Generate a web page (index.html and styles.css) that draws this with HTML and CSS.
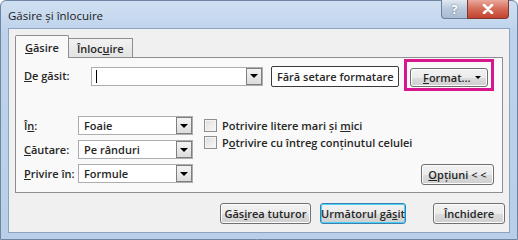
FILE: index.html
```html
<!DOCTYPE html>
<html lang="ro">
<head>
  <meta charset="UTF-8" />
  <meta name="viewport" content="width=device-width, initial-scale=1.0"/>
  <title>Găsire și înlocuire</title>
  <link rel="stylesheet" href="styles.css">
</head>
<body>
  <div class="window">
    <div class="titlebar">
      <span class="title">Găsire și înlocuire</span>
      <div class="caption-btns">
        <span class="cap help">?</span>
        <span class="cap close">
          <svg width="14" height="10" viewBox="0 0 14 10"><path d="M3 1 L11 9 M11 1 L3 9" stroke="#fff" stroke-width="2.6" stroke-linecap="round"/></svg>
        </span>
      </div>
    </div>

    <div class="client">
      <div class="tabs">
        <div class="tab active"><u>G</u>ăsire</div>
        <div class="tab">Înloc<u>u</u>ire</div>
      </div>

      <div class="panel">
        <div class="find-row">
          <label class="find-label"><u>D</u>e găsit:</label>
          <div class="combo find-combo">
            <span class="caret"></span>
            <span class="drop"><span class="arrow"></span></span>
          </div>
          <button class="btn plain">Fără setare formatare</button>
          <div class="highlight">
            <button class="btn split"><span><u>F</u>ormat...</span><span class="small-arrow"></span></button>
          </div>
        </div>

        <div class="options">
          <div class="fields">
            <label>Î<u>n</u>:</label>
            <div class="combo"><span class="value">Foaie</span><span class="drop"><span class="arrow"></span></span></div>
            <label><u>C</u>ăutare:</label>
            <div class="combo"><span class="value">Pe rânduri</span><span class="drop"><span class="arrow"></span></span></div>
            <label><u>P</u>rivire în:</label>
            <div class="combo"><span class="value">Formule</span><span class="drop"><span class="arrow"></span></span></div>
          </div>

          <div class="checks">
            <div class="check"><span class="box"></span>Potrivire litere mari și&nbsp;<u>m</u>ici</div>
            <div class="check"><span class="box"></span>P<u>o</u>trivire cu întreg conținutul celulei</div>
            <button class="btn options-btn"><u>O</u>pțiuni &lt; &lt;</button>
          </div>
        </div>
      </div>

      <div class="actions">
        <button class="btn find-all">Găs<u>i</u>rea tuturor</button>
        <button class="btn default">Următorul gă<u>s</u>it</button>
        <button class="btn close-btn">Închidere</button>
      </div>
    </div>
  </div>
</body>
</html>
```

FILE: styles.css
```css
* {
  margin: 0;
  padding: 0;
  box-sizing: border-box;
}

body {
  font-family: 'Open Sans', 'Noto Sans', sans-serif;
  font-size: 11px;
  font-weight: 600;
  color: #262626;
  background: #fff;
}

.window {
  width: 518px;
  height: 240px;
  background: linear-gradient(#d0e0f2, #bed3eb 30px, #b9cfe8);
  border: 1px solid #6e86a3;
  border-radius: 6px 6px 0 0;
  padding: 0 7px 6px 7px;
  display: flex;
  flex-direction: column;
}

.titlebar {
  height: 27px;
  display: flex;
  justify-content: space-between;
  align-items: flex-start;
}

.title {
  margin-top: 7px;
  font-size: 11.5px;
  font-weight: 400;
  color: #1a1a1a;
}

.caption-btns {
  display: flex;
  margin-top: -1px;
  margin-right: 1px;
}

.cap {
  height: 19px;
  display: flex;
  align-items: center;
  justify-content: center;
  border: 1px solid #6a7f99;
  border-top: none;
}

.help {
  width: 26px;
  border-radius: 0 0 0 4px;
  border-right: none;
  background: linear-gradient(#dfe8f2, #b9c9db 50%, #a9bbd0);
  color: #fff;
  font-weight: 700;
  font-size: 12px;
  text-shadow: 0 0 2px #5c6f86;
}

.close {
  width: 42px;
  border-radius: 0 0 4px 0;
  border-color: #7d3a33;
  background: linear-gradient(#e9a99b, #d56b57 50%, #c2432f);
}

.client {
  flex: 1;
  background: #f0f0f0;
  border: 1px solid #8ea3bd;
  padding: 6px 6px 0 6px;
}

.tabs {
  display: flex;
  align-items: flex-end;
  height: 22px;
  position: relative;
  z-index: 1;
}

.tab {
  height: 19px;
  padding: 2px 8px 0 8px;
  border: 1px solid #8c8e94;
  border-bottom: none;
  background: linear-gradient(#f2f2f2, #e3e3e3);
  margin-left: -1px;
}

.tab.active {
  height: 23px;
  padding: 4px 9px 0 9px;
  background: #f9f9f9;
  margin-left: 0;
  margin-bottom: -1px;
  border-radius: 2px 2px 0 0;
}

.tab.active + .tab {
  margin-left: 0;
  border-left: none;
}

.panel {
  background: #f9f9f9;
  border: 1px solid #8c8e94;
  height: 136px;
  padding: 0 8px 8px 8px;
  display: flex;
  flex-direction: column;
}

.find-row {
  display: flex;
  align-items: center;
  height: 34px;
}

.find-label {
  width: 69px;
}

.combo {
  height: 19px;
  background: #fff;
  border: 1px solid #abadb3;
  display: flex;
  align-items: center;
  justify-content: space-between;
}

.find-combo {
  width: 177px;
  margin-top: 2px;
}

.caret {
  width: 1px;
  height: 13px;
  background: #000;
  margin-left: 4px;
}

.value {
  padding-left: 5px;
}

.drop {
  width: 16px;
  height: 17px;
  border: 1px solid #7f7f7f;
  background: linear-gradient(#f3f3f3, #dcdcdc);
  display: flex;
  align-items: center;
  justify-content: center;
}

.arrow {
  width: 0;
  height: 0;
  border-left: 4px solid transparent;
  border-right: 4px solid transparent;
  border-top: 4px solid #000;
}

.btn {
  font-family: inherit;
  font-size: 11px;
  font-weight: 600;
  color: #262626;
  height: 21px;
  border: 1px solid #707070;
  border-radius: 3px;
  background: linear-gradient(#f2f2f2, #ebebeb 50%, #dddddd 51%, #cfcfcf);
  box-shadow: inset 0 0 0 1px #fcfcfc;
}

.plain {
  width: 131px;
  margin-left: 8px;
  margin-top: 2px;
  border: 1px solid #3a3a3a;
  border-radius: 2px;
  background: #fff;
  box-shadow: none;
}

.highlight {
  margin-left: 5px;
  border: 3px solid #d6168c;
  padding: 6px 3px 1px 3px;
}

.split {
  width: 78px;
  height: 19px;
  display: flex;
  align-items: center;
  justify-content: space-between;
  padding: 0 6px 0 12px;
}

.small-arrow {
  width: 0;
  height: 0;
  border-left: 3px solid transparent;
  border-right: 3px solid transparent;
  border-top: 3px solid #000;
}

.options {
  display: flex;
  margin-top: 24px;
  flex: 1;
}

.fields {
  display: grid;
  grid-template-columns: 54px 115px;
  grid-auto-rows: 19px;
  row-gap: 5px;
  align-items: center;
}

.checks {
  flex: 1;
  margin-left: 11px;
  display: flex;
  flex-direction: column;
}

.check {
  display: flex;
  align-items: center;
  height: 17px;
  margin-top: 1px;
}

.check + .check {
  margin-top: 0;
}

.box {
  width: 13px;
  height: 13px;
  border: 1px solid #8f8f8f;
  background: linear-gradient(135deg, #dcdcdc, #fbfbfb);
  box-shadow: inset 0 0 0 1px #f4f4f4;
  margin-right: 5px;
}

.options-btn {
  align-self: flex-end;
  margin-top: auto;
  width: 73px;
  margin-bottom: -1px;
}

.actions {
  display: flex;
  justify-content: flex-end;
  margin-top: 10px;
  margin-right: -2px;
}

.find-all {
  width: 91px;
}

.default {
  width: 86px;
  margin-left: 9px;
  border-color: #3c7fb1;
  box-shadow: inset 0 0 0 1px #48d1f7;
}

.close-btn {
  width: 72px;
  margin-left: 27px;
}
```
